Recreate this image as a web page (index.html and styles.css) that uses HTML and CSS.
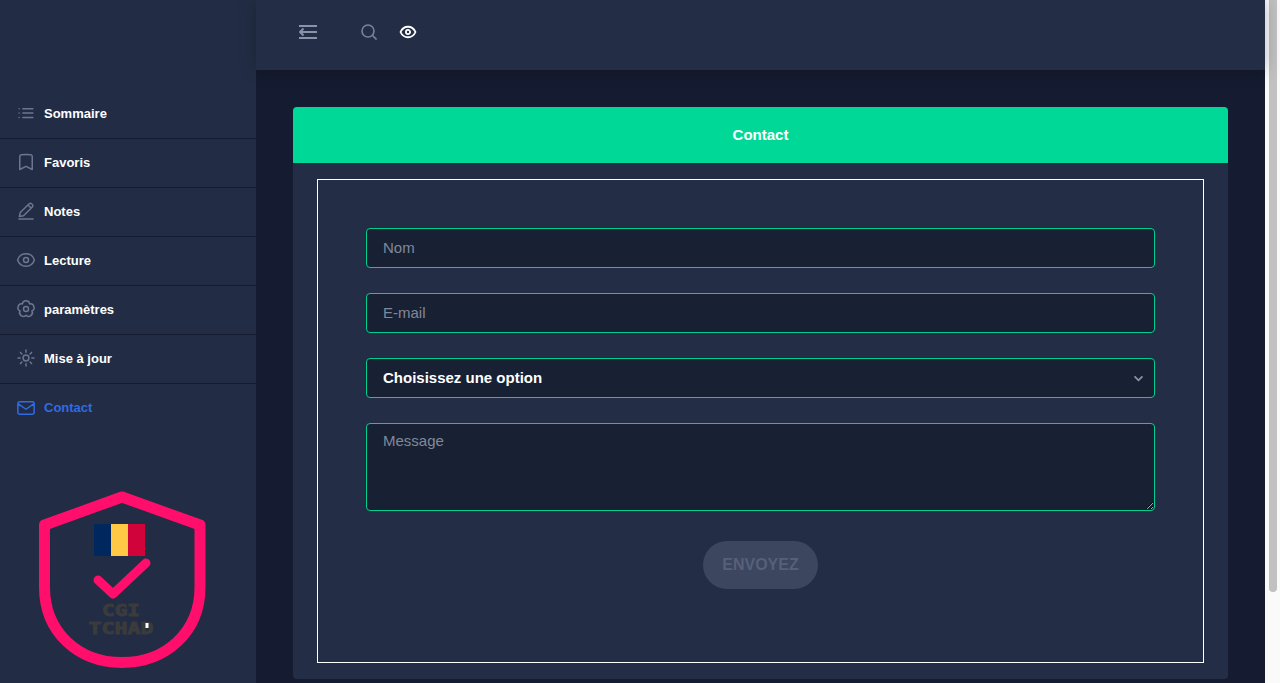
FILE: index.html
```html
<!DOCTYPE html>
<html lang="fr">
<head>
  <meta charset="UTF-8">
  <meta name="viewport" content="width=device-width, initial-scale=1">
  <title>Contact</title>
  <link rel="stylesheet" href="styles.css">
</head>
<body>
  <div class="app">
    <!-- menu de gauche -->
    <aside class="sidebar">
      <nav class="side-nav">
        <a class="side-link" href="#">
          <svg class="side-icon" viewBox="0 0 24 24"><path d="M8.250 6.750h12M8.250 12h12m-12 5.250h12M3.750 6.750h.01M3.750 12h.01M3.750 17.250h.01"/></svg>
          <span>Sommaire</span>
        </a>
        <a class="side-link" href="#">
          <svg class="side-icon" viewBox="0 0 24 24"><path d="M17.593 3.322c1.100.128 1.907 1.077 1.907 2.185V21L12 17.250 4.500 21V5.507c0-1.108.806-2.057 1.907-2.185a48.507 48.507 0 0111.186 0z"/></svg>
          <span>Favoris</span>
        </a>
        <a class="side-link" href="#">
          <svg class="side-icon" viewBox="0 0 24 24"><path d="M3.500 21.500h17M14.600 5l3.500 3.500M15.800 3.300a2 2 0 012.900 0l.9.900a2 2 0 010 2.900L9 17.700l-4.900 1 1-4.900L15.800 3.300z"/></svg>
          <span>Notes</span>
        </a>
        <a class="side-link" href="#">
          <svg class="side-icon" viewBox="0 0 24 24"><path d="M2.036 12.322a1.012 1.012 0 010-.639C3.423 7.510 7.360 4.500 12 4.500c4.638 0 8.573 3.007 9.963 7.178.070.207.070.431 0 .639C20.577 16.490 16.640 19.500 12 19.500c-4.638 0-8.573-3.007-9.963-7.178z"/><path d="M15 12a3 3 0 11-6 0 3 3 0 016 0z"/></svg>
          <span>Lecture</span>
        </a>
        <a class="side-link" href="#">
          <svg class="side-icon" viewBox="0 0 24 24"><path d="M7.590 5.930A4.450 4.450 0 0116.410 5.930A4.450 4.450 0 0119.130 14.320A4.450 4.450 0 0112 19.500A4.450 4.450 0 014.870 14.320A4.450 4.450 0 017.590 5.930z"/><circle cx="12" cy="12" r="3"/></svg>
          <span>paramètres</span>
        </a>
        <a class="side-link" href="#">
          <svg class="side-icon" viewBox="0 0 24 24"><path d="M12 2.500v2.500M12 19v2.500M2.500 12H5M19 12h2.500M5.300 5.300l1.800 1.800M16.900 16.900l1.800 1.800M5.300 18.700l1.800-1.800M16.900 7.100l1.800-1.800"/><circle cx="12" cy="12" r="3.500"/></svg>
          <span>Mise à jour</span>
        </a>
        <a class="side-link side-link-active" href="#">
          <svg class="side-icon" viewBox="0 0 24 24"><path d="M21.750 6.750v10.500a2.250 2.250 0 01-2.250 2.250h-15a2.250 2.250 0 01-2.250-2.250V6.750m19.500 0A2.250 2.250 0 0019.500 4.500h-15a2.250 2.250 0 00-2.250 2.250m19.500 0L12 13.500 2.250 6.750"/></svg>
          <span>Contact</span>
        </a>
      </nav>
      <!-- logo -->
      <svg class="side-logo" viewBox="0 483 256 200">
        <path class="logo-shield" d="M44.500 525L122 497l78 28v62c0 45-34 75.500-78 75.500S44.500 632 44.500 587z"/>
        <rect x="94" y="524" width="17" height="32" fill="#00285f"/>
        <rect x="111" y="524" width="17" height="32" fill="#ffc845"/>
        <rect x="128" y="524" width="17" height="32" fill="#d0043a"/>
        <path class="logo-check" d="M98 580l15 14 33-31"/>
        <text class="logo-text" x="121" y="616" textLength="38" lengthAdjust="spacingAndGlyphs">CGI</text>
        <text class="logo-text" x="121" y="633.500" textLength="65" lengthAdjust="spacingAndGlyphs">TCHAD</text>
        <rect x="145.500" y="623" width="3" height="5" fill="#ffffff"/>
      </svg>
    </aside>

    <div class="content">
      <!-- barre du haut -->
      <header class="topbar">
        <svg class="top-menu" viewBox="0 0 20 16"><path d="M1 2h18M3 8h16M1 14h18M5.500 4.500L2 8l3.500 3.500"/></svg>
        <svg class="top-search" viewBox="0 0 16 16"><circle cx="7" cy="7" r="6"/><path d="M11.500 11.500l4 4"/></svg>
        <svg class="top-eye" viewBox="0 0 24 24"><path d="M2 12c2-4.500 5.500-7 10-7s8 2.500 10 7c-2 4.500-5.500 7-10 7s-8-2.500-10-7z"/><circle cx="12" cy="12" r="2.800"/></svg>
      </header>

      <main class="main">
        <section class="card">
          <h2 class="card-title">Contact</h2>
          <div class="card-body">
            <form class="contact-form">
              <input class="field" type="text" placeholder="Nom">
              <input class="field" type="text" placeholder="E-mail">
              <div class="select-wrap">
                <select class="field field-select">
                  <option>Choisissez une option</option>
                </select>
                <svg class="select-arrow" viewBox="0 0 12 8"><path d="M1.500 1.500L6 6l4.500-4.500"/></svg>
              </div>
              <textarea class="field field-area" placeholder="Message"></textarea>
              <button class="send-btn" type="button">ENVOYEZ</button>
            </form>
          </div>
        </section>
      </main>
    </div>

    <!-- barre de défilement -->
    <div class="scroll-track"><div class="scroll-thumb"></div></div>
  </div>
</body>
</html>
```

FILE: styles.css
```css
/* page */
* {
  box-sizing: border-box;
}
body {
  margin: 0;
  font-family: "Liberation Sans", Arial, sans-serif;
  background-color: #151b30;
}
.app {
  display: flex;
  height: 683px;
  overflow: hidden;
}

/* menu de gauche */
.sidebar {
  width: 256px;
  flex-shrink: 0;
  display: flex;
  flex-direction: column;
  justify-content: space-between;
  padding-top: 90px;
  background-color: #222d45;
}
.side-nav {
  display: flex;
  flex-direction: column;
}
.side-link {
  display: flex;
  align-items: center;
  gap: 8px;
  height: 49px;
  padding: 0 0 2px 16px;
  border-bottom: 1px solid #151b30;
  color: #ffffff;
  font-size: 13px;
  font-weight: bold;
  text-decoration: none;
}
.side-link:last-child {
  border-bottom: none;
}
.side-icon {
  width: 20px;
  height: 20px;
  fill: none;
  stroke: #6c7690;
  stroke-width: 1.8;
  stroke-linecap: round;
  stroke-linejoin: round;
}
.side-link-active {
  color: #2f6be4;
}
.side-link-active .side-icon {
  stroke: #2f6be4;
}
.side-logo {
  display: block;
  width: 256px;
  height: 200px;
}
.logo-shield {
  fill: none;
  stroke: #ff0f6b;
  stroke-width: 11;
  stroke-linejoin: round;
}
.logo-check {
  fill: none;
  stroke: #ff0f6b;
  stroke-width: 9;
  stroke-linecap: round;
  stroke-linejoin: round;
}
.logo-text {
  fill: #3b3b3b;
  stroke: #3b3b3b;
  stroke-width: 0.8;
  font-family: "DejaVu Sans Mono", monospace;
  font-size: 15px;
  font-weight: bold;
  text-anchor: middle;
}

/* partie droite */
.content {
  flex: 1;
  min-width: 0;
  display: flex;
  flex-direction: column;
}
.topbar {
  position: relative;
  display: flex;
  align-items: center;
  flex-shrink: 0;
  height: 70px;
  padding: 0 0 6px 42px;
  background-color: #232d46;
  box-shadow: 0 0 16px rgba(0,0,0,0.25);
}
.topbar svg {
  fill: none;
  stroke-linejoin: round;
}
.top-menu {
  width: 20px;
  height: 16px;
  stroke: #8a93a8;
  stroke-width: 1.9;
}
.top-search {
  width: 16px;
  height: 16px;
  margin-left: 43px;
  stroke: #78829a;
  stroke-width: 1.6;
}
.top-eye {
  width: 18px;
  height: 18px;
  margin-left: 22px;
  stroke: #ffffff;
  stroke-width: 2.4;
}
.main {
  flex: 1;
  padding: 37px;
  overflow: hidden;
}

/* carte */
.card {
  border-radius: 4px;
  background-color: #232d46;
}
.card-title {
  margin: 0;
  height: 56px;
  line-height: 56px;
  text-align: center;
  border-radius: 4px 4px 0 0;
  background-color: #00d897;
  color: #ffffff;
  font-size: 15px;
  font-weight: bold;
}
.card-body {
  padding: 16px 24px;
}
.contact-form {
  display: flex;
  flex-direction: column;
  gap: 25px;
  padding: 48px 48px 73px;
  border: 1px solid #ffffff;
}
.field {
  display: block;
  width: 100%;
  height: 40px;
  padding: 0 16px 2px;
  border: 1px solid #00d08f;
  border-radius: 4px;
  background-color: #182034;
  color: #ffffff;
  font-family: inherit;
  font-size: 15px;
  outline: none;
}
.field::placeholder {
  color: #808999;
  opacity: 1;
}
.select-wrap {
  position: relative;
}
.field-select {
  appearance: none;
  font-weight: bold;
}
.select-arrow {
  position: absolute;
  top: 17px;
  right: 11px;
  width: 11px;
  height: 7px;
  fill: none;
  stroke: #8a93a8;
  stroke-width: 2;
}
.field-area {
  height: 88px;
  padding-top: 8px;
  resize: vertical;
}
.send-btn {
  align-self: center;
  width: 115px;
  height: 48px;
  margin-top: 5px;
  border: none;
  border-radius: 24px;
  background-color: #3c465f;
  color: #566079;
  font-family: inherit;
  font-size: 16px;
  font-weight: bold;
}

/* barre de défilement */
.scroll-track {
  width: 15px;
  flex-shrink: 0;
  padding: 0 3px 0 4px;
  background-color: #fafafa;
}
.scroll-thumb {
  height: 592px;
  border-radius: 0 0 4px 4px;
  background-color: #c1c1c1;
}
```
